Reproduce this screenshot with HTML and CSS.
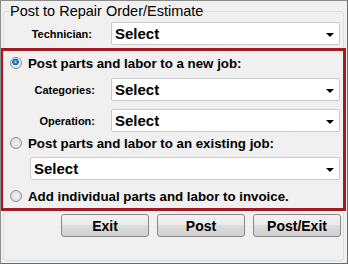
FILE: index.html
```html
<!DOCTYPE html>
<html lang="en">
<head>
    <meta charset="UTF-8">
    <title>Post to Repair Order/Estimate</title>
    <link rel="stylesheet" href="styles.css">
</head>
<body>
    <div class="window">
        <fieldset class="group">
            <legend>Post to Repair Order/Estimate</legend>

            <div class="field-row tech-row">
                <span class="field-label">Technician:</span>
                <div class="combo"><span>Select</span><i class="arrow"></i></div>
            </div>

            <div class="highlight">
                <label class="option">
                    <span class="radio checked"></span>
                    <span>Post parts and labor to a new job:</span>
                </label>
                <div class="field-row cat-row">
                    <span class="field-label">Categories:</span>
                    <div class="combo"><span>Select</span><i class="arrow"></i></div>
                </div>
                <div class="field-row op-row">
                    <span class="field-label">Operation:</span>
                    <div class="combo"><span>Select</span><i class="arrow"></i></div>
                </div>

                <label class="option existing">
                    <span class="radio"></span>
                    <span>Post parts and labor to an existing job:</span>
                </label>
                <div class="combo wide"><span>Select</span><i class="arrow"></i></div>

                <label class="option last">
                    <span class="radio"></span>
                    <span>Add individual parts and labor to invoice.</span>
                </label>
            </div>

            <div class="buttons">
                <button class="btn">Exit</button>
                <button class="btn">Post</button>
                <button class="btn">Post/Exit</button>
            </div>
        </fieldset>
    </div>
</body>
</html>
```

FILE: styles.css
```css
body {
    margin: 0;
    padding: 0;
    background: #f0f0f0;
    font-family: 'Liberation Sans', Arial, sans-serif;
    color: #000;
}

.window {
    width: 348px;
    height: 264px;
    box-sizing: border-box;
    border: 1px solid #6a6a6a;
    border-top-color: #8c8c8c;
    border-left-color: #8c8c8c;
    background: #f0f0f0;
    overflow: hidden;
}

/* group box */
.group {
    margin: 2px 0 0 2px;
    padding: 0;
    width: 341px;
    height: 258px;
    border: 1px solid #d5dfe5;
    border-radius: 3px;
    box-sizing: border-box;
    min-width: 0;
}

.group legend {
    padding: 0 1px;
    margin-left: 5px;
    font-size: 14.5px;
    line-height: 17px;
}

/* label + dropdown rows */
.field-row {
    display: grid;
    align-items: center;
}

.tech-row {
    grid-template-columns: 88px 1fr;
    column-gap: 19px;
    margin-top: 2px;
    padding-right: 3px;
}

.cat-row,
.op-row {
    grid-template-columns: 92px 1fr;
    column-gap: 16px;
    padding-right: 3px;
}

.cat-row {
    margin-top: 6px;
}

.op-row {
    margin-top: 8px;
}

.field-label {
    font-size: 11px;
    font-weight: bold;
    text-align: right;
}

.combo {
    height: 23px;
    box-sizing: border-box;
    background: #fff;
    border: 1px solid #c9cbce;
    border-radius: 2px;
    display: flex;
    align-items: center;
    justify-content: space-between;
    padding: 0 5px 0 3px;
    font-size: 15px;
    font-weight: bold;
}

.combo.wide {
    margin: 5px 3px 0 27px;
}

.arrow {
    width: 0;
    height: 0;
    border-left: 4px solid transparent;
    border-right: 4px solid transparent;
    border-top: 4px solid #000;
    margin-top: 2px;
}

/* red highlight frame */
.highlight {
    border: 3px solid #a31a22;
    margin: 3px -3px 0 -4px;
    padding: 3px 0 3px 0;
}

.option {
    display: flex;
    align-items: center;
    gap: 6px;
    padding-left: 7px;
    font-size: 13.3px;
    font-weight: bold;
    height: 18px;
}

.option.existing {
    margin-top: 2px;
}

.option.last {
    margin-top: 7px;
}

.radio {
    width: 10px;
    height: 10px;
    border-radius: 50%;
    border: 1px solid #8e8f8f;
    background: radial-gradient(circle at 50% 50%, #f4f4f4, #d2d2d2);
    flex: none;
}

.radio.checked {
    background: radial-gradient(circle at 45% 40%, #9cdcfb 0, #2b7ac2 2px, #1b5aa0 3px, #eef0f2 3.6px, #d6d6d6 100%);
}

/* buttons */
.buttons {
    display: flex;
    justify-content: flex-end;
    gap: 8px;
    margin-top: 3px;
    padding-right: 2px;
}

.btn {
    width: 88px;
    height: 23px;
    border: 1px solid #8a8a8a;
    border-radius: 3px;
    background: linear-gradient(#f2f2f2 0%, #ebebeb 45%, #dddddd 50%, #cfcfcf 100%);
    font-family: 'Liberation Sans', Arial, sans-serif;
    font-size: 14px;
    font-weight: bold;
    color: #000;
    padding: 0;
}
```
